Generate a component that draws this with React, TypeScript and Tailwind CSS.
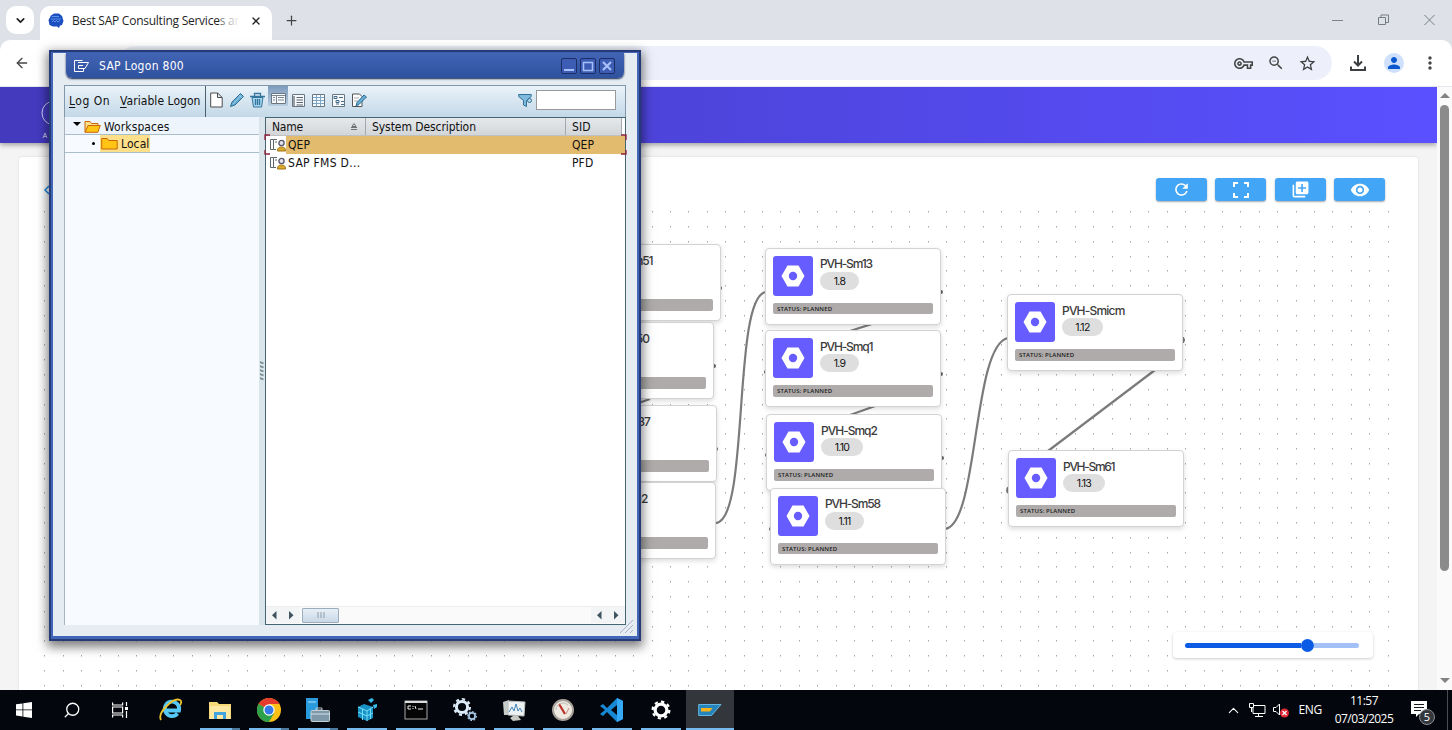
import type { ReactNode } from "react";
import {
  MdRefresh,
  MdFullscreen,
  MdLibraryAdd,
  MdVisibility,
  MdOutlineVpnKey,
  MdZoomOut,
  MdStarBorder,
  MdPerson,
  MdMoreVert,
} from "react-icons/md";
import { ArrowLeft, ChevronDown, Plus, X, ChevronUp, Search } from "lucide-react";

/* ---------- Browser chrome ---------- */

function TabStrip() {
  return (
    <div className="flex h-10 shrink-0 items-start bg-[#dee1e8]">
      <div className="ml-1.5 mt-1.5 flex h-7 w-7 items-center justify-center rounded-[10px] bg-white">
        <ChevronDown size={13} strokeWidth={3} color="#1f1f1f" />
      </div>
      <div className="ml-1.5 mt-1.5 flex h-[34px] w-[232px] items-center rounded-t-[10px] bg-white pb-[5px] pl-2">
        <svg width="16" height="16" viewBox="0 0 16 16">
          <path d="M3 2.500 6 .5h5l3 2.500 1.500 5-1.500 4-2 .5-1 2.500-2-1.500H5L1.500 12 .5 7Z" fill="#1b4fc0" />
          <path d="M4 3.500h7M3 6h10M4 9l1.500-1.500L7 9l1.500-1.500L10 9l2-1.500" stroke="#6fa3f5" strokeWidth=".8" fill="none" />
        </svg>
        <div className="relative ml-2 h-5 w-[168px] overflow-hidden whitespace-nowrap font-['Open_Sans',sans-serif] text-[12px] leading-5 tracking-[-0.25px] text-[#1f1f1f]">
          Best SAP Consulting Services ar
          <div className="absolute right-0 top-0 h-5 w-5 bg-linear-to-r from-white/30 to-white" />
        </div>
        <X size={12} strokeWidth={2.6} color="#1f1f1f" className="ml-2.5" />
      </div>
      <Plus size={15} strokeWidth={2} color="#444746" className="ml-3 mt-[13px]" />
      <div className="mr-[17px] mt-[14px] flex flex-1 items-center justify-end gap-[35px]">
        <svg width="11" height="12" viewBox="0 0 11 12"><path d="M0 6.500h11" stroke="#80858b" /></svg>
        <svg width="11" height="12" viewBox="0 0 11 12" fill="none" stroke="#777c82"><path d="M.5 3.500h7v7h-7zM3 3.500v-2.500h7.500v7.500H7.500" /></svg>
        <svg width="11" height="12" viewBox="0 0 11 12"><path d="m.5 1 10 10m0-10L.5 11" stroke="#777c82" /></svg>
      </div>
    </div>
  );
}

function AddressBar() {
  return (
    <div className="h-[47px] shrink-0 bg-[#dee1e8]">
      <div className="flex h-[47px] items-center rounded-t-[10px] border-b border-[#e4e7ec] bg-white pl-[14px]">
        <ArrowLeft size={16} strokeWidth={2} color="#444746" />
        <div className="ml-[88px] flex h-[34px] w-[1214px] items-center justify-end rounded-full bg-[#edf0fa] pr-[15px]">
          <MdOutlineVpnKey size={19} color="#444746" />
          <MdZoomOut size={18} color="#444746" className="ml-[14px]" />
          <MdStarBorder size={19} color="#3c4043" className="ml-[13px]" />
        </div>
        <svg width="16" height="16" viewBox="0 0 16 16" fill="none" stroke="#3c4043" strokeWidth="2" className="ml-[18px]">
          <path d="M8 0v10M4 6.500l4 4 4-4M1 11.500V15h14v-3.500" />
        </svg>
        <div className="ml-[18px] flex h-5 w-5 items-center justify-center rounded-full bg-[#cfe0fc]">
          <MdPerson size={18} color="#0b57d0" />
        </div>
        <MdMoreVert size={20} color="#444746" className="ml-4" />
      </div>
    </div>
  );
}

/* ---------- Workflow canvas ---------- */

type FlowNode = { x: number; y: number; name: string; step: string; pill: string; track: string; tall?: boolean };

const nodes: FlowNode[] = [
  { x: 545, y: 157, name: "PVH-Sm51", step: "1.4", pill: "w-[39px]", track: "tracking-[-1.150px]", tall: true },
  { x: 538, y: 235, name: "PVH-Sm50", step: "1.5", pill: "w-[39px]", track: "tracking-[-1.050px]", tall: true },
  { x: 541, y: 318, name: "PVH-Sm37", step: "1.6", pill: "w-[39px]", track: "tracking-[-1.250px]", tall: true },
  { x: 540, y: 395, name: "PVH-St02", step: "1.7", pill: "w-[39px]", track: "tracking-[-0.6px]", tall: true },
  { x: 765, y: 161, name: "PVH-Sm13", step: "1.8", pill: "w-[39px]", track: "tracking-[-1.150px]" },
  { x: 765, y: 243, name: "PVH-Smq1", step: "1.9", pill: "w-[39px]", track: "tracking-[-1.150px]", tall: true },
  { x: 766, y: 327, name: "PVH-Smq2", step: "1.10", pill: "w-[42px]", track: "tracking-[-1px]", tall: true },
  { x: 770, y: 401, name: "PVH-Sm58", step: "1.11", pill: "w-[39px]", track: "tracking-[-1.150px]" },
  { x: 1007, y: 207, name: "PVH-Smicm", step: "1.12", pill: "w-[41px]", track: "tracking-[-0.8px]", tall: true },
  { x: 1008, y: 363, name: "PVH-Sm61", step: "1.13", pill: "w-[42px]", track: "tracking-[-1.300px]", tall: true },
];

const handles: [number, number][] = [
  [720, 288], [714, 366], [716, 449], [941, 292], [941, 374], [942, 458],
  [766, 372], [767, 455], [771, 529], [1183, 340], [1009, 490],
];

function NodeCard({ node }: { node: FlowNode }) {
  return (
    <div
      className="absolute flex h-[77px] w-[176px] flex-col rounded-[4px] border border-[#d3d3d3] bg-white px-[7px] pt-[7px] shadow-[0_2px_5px_rgba(0,0,0,0.14)]"
      style={{ left: node.x, top: node.y }}
    >
      <div className="flex h-10">
        <div className="flex h-10 w-10 shrink-0 items-center justify-center rounded-[3px] bg-[#665cff]">
          <svg width="24" height="22" viewBox="0 0 24 22">
            <path d="M6.500.5h11L23.500 11l-6 10.500h-11L.5 11Z" fill="#fff" />
            <circle cx="12" cy="11" r="4.200" fill="#665cff" />
          </svg>
        </div>
        <div className="ml-[7px] flex flex-col items-start whitespace-nowrap font-['Inter',sans-serif]">
          <div className={`h-[16px] text-[12px] font-medium text-[#3c3c3c] ${node.tall ? "leading-[18px]" : "leading-[16px]"} ${node.track}`}>{node.name}</div>
          <div className={`flex h-[18px] items-center justify-center rounded-full bg-[#dedede] pt-px text-[10.500px] tracking-[-0.7px] text-[#111] ${node.pill}`}>
            {node.step}
          </div>
        </div>
      </div>
      <div className={`mt-[7px] flex items-center rounded-[2px] bg-[#afabab] pl-1 pt-px font-['Open_Sans',sans-serif] text-[6px] font-semibold tracking-[0.140px] text-[#1a1a1a] ${node.tall ? "h-[12px]" : "h-[11px]"}`}>
        STATUS: PLANNED
      </div>
    </div>
  );
}

function CanvasLines() {
  const dots: ReactNode[] = [];
  for (let r = 0; r < 33; r++) {
    for (let c = 0; c < 74; c++) {
      dots.push(<rect key={`${r}-${c}`} x={Math.round(44.4 + c * 18.4)} y={Math.round(211.2 + r * 14.8)} width="1" height="1.500" />);
    }
  }
  return (
    <svg className="absolute inset-0" width="1437" height="603" viewBox="0 87 1437 603">
      <g fill="#a6a6a6">{dots}</g>
      <g fill="#666">{handles.map(([x, y]) => <circle key={`${x}-${y}`} cx={x} cy={y} r="2" />)}</g>
      <g fill="none" stroke="#7b7b7b" strokeWidth="2.200">
        <path d="M716 523C750 520 732 296 766 292" />
        <path d="M945 529C979 525 972 345 1008 338" />
        <path d="M1155 370 1048 451M850 331l25-8M850 415l28-10M630 406l20-7" />
        <path d="M1183 337v6M1009 487q-3 2-1 6" />
      </g>
    </svg>
  );
}

function ActionButton({ children }: { children: ReactNode }) {
  return (
    <div className="flex h-[23px] w-[51px] items-center justify-center rounded-[3px] bg-[#42a5f5] text-white shadow-[0_1px_2px_rgba(0,0,0,0.35)]">
      {children}
    </div>
  );
}

function WorkflowPage() {
  return (
    <div className="relative isolate flex h-[603px] w-[1437px] shrink-0 flex-col overflow-hidden bg-[#f4f4f4]">
      <header className="z-10 flex h-14 shrink-0 items-center bg-linear-to-r from-[#433abd] to-[#5a50ff] pl-[41px] shadow-[0_2px_5px_rgba(0,0,0,0.35)]">
        <svg width="30" height="50" viewBox="0 0 30 50" fill="none">
          <circle cx="13" cy="23" r="12" stroke="#d5d3f5" />
          <path d="m2 48 2-5 2 5m-3.200-1.500h2.400" stroke="#d5d3f5" strokeWidth=".8" />
        </svg>
      </header>
      <main className="mx-[19px] mt-[14px] flex flex-1 flex-col rounded-t-[3px] bg-white shadow-[0_0_2px_rgba(0,0,0,0.15)]">
        <div className="flex items-center pl-[24px] pr-[33px] pt-[21px]">
          <svg width="8" height="12" viewBox="0 0 8 12"><path d="M6 2 2 6l4 4" fill="none" stroke="#1e88e5" strokeWidth="1.500" /></svg>
          <div className="z-10 ml-auto flex gap-[8.400px]">
            <ActionButton><MdRefresh size={19} /></ActionButton>
            <ActionButton>
              <svg width="16" height="16" viewBox="0 0 16 16" fill="none" stroke="#fff" strokeWidth="2"><path d="M1 5V1h4M11 1h4v4M15 11v4h-4M5 15H1v-4" /></svg>
            </ActionButton>
            <ActionButton><MdLibraryAdd size={19} /></ActionButton>
            <ActionButton><MdVisibility size={20} /></ActionButton>
          </div>
        </div>
        <div className="z-20 mb-8 ml-auto mr-[45px] mt-auto flex h-[26px] w-[200px] items-center rounded-[4px] bg-white pl-3 pr-[14px] pt-px shadow-[0_1px_3px_rgba(0,0,0,0.2)]">
          <div className="h-[5px] w-[116px] rounded-l-full bg-[#0b5be5]" />
          <div className="h-[13px] w-[13px] shrink-0 rounded-full bg-[#0b5be5]" />
          <div className="h-[5px] flex-1 rounded-r-full bg-[#a3c0f8]" />
        </div>
      </main>
      <CanvasLines />
      {nodes.map((n) => <NodeCard key={n.name} node={n} />)}
    </div>
  );
}

function PageScrollbar() {
  return (
    <div className="flex w-[15px] flex-col items-center bg-[#fafafa] pt-[6px]">
      <div className="h-0 w-0 border-x-[5px] border-b-[5px] border-x-transparent border-b-[#828282]" />
      <div className="mt-[7px] h-[466px] w-[9px] rounded-full bg-[#8b8b8b]" />
      <div className="mb-[7px] mt-auto h-0 w-0 border-x-[5px] border-t-[5px] border-x-transparent border-t-[#828282]" />
    </div>
  );
}

/* ---------- SAP Logon window ---------- */

function WindowButton({ children }: { children: ReactNode }) {
  return (
    <div className="flex h-[16px] w-[16px] items-center justify-center rounded-[2px] border border-[#1b2f66] bg-[#3c5db3]">
      <svg width="12" height="12" viewBox="0 0 12 12" fill="none" stroke="#a9c1fa">{children}</svg>
    </div>
  );
}

function Folder({ open = false }: { open?: boolean }) {
  return (
    <svg width="17" height="13" viewBox="0 0 17 13" fill="#ffc414" stroke="#c9660a">
      {open ? (
        <><path d="M1 12V1.500h5l1.500 2H14V6" fill="#ffe08a" /><path d="M1 12.300 4 5.500h12.300l-2.500 6.800Z" /></>
      ) : (
        <path d="M.7 12V1.500h5.500l1.500 2h8.500V12Z" />
      )}
    </svg>
  );
}

function SystemIcon() {
  return (
    <svg width="16" height="14" viewBox="0 0 16 14" fill="none" className="shrink-0">
      <path d="M.5 1.500h3v10h-3zM3.500 1.500H7M3.500 11.500H6M5 4h2" stroke="#5c666c" />
      <circle cx="11.500" cy="5" r="2.600" fill="#e6e4ee" stroke="#54546a" strokeWidth="1.300" />
      <path d="M7.500 13c0-3 1.500-4 4-4s4 1 4 4Z" fill="#dba92c" stroke="#a17414" />
    </svg>
  );
}

function SheetIcon({ kind }: { kind: "panel" | "list" | "grid" | "tree" }) {
  return (
    <svg width="15" height="15" viewBox="0 0 15 15" fill="none">
      <path d={kind === "panel" ? "M.5 2.500h14v10H.5z" : "M1.500 1.500h12v12h-12z"} fill="#f7fafc" stroke="#6b7780" />
      {kind === "panel" && <path d="M1 4.500h13M5.500 4v8M2 6.500h2M2 9h2M7 6.500h6M7 9h6" stroke="#7a8791" />}
      {kind === "list" && <path d="M3 3v10M5.500 4.500H12M5.500 7H12M5.500 9.500H12M5.500 12H12" stroke="#59646c" strokeWidth="1.200" />}
      {kind === "grid" && <path d="M2 4.500h11M2 7.500h11M2 10.500h11M5.500 2v11M9.500 2v11" stroke="#7ba5c4" />}
      {kind === "tree" && <path d="M3 3.500h3v2H3zM5 7.500h3v2H5zM5 11h3M8 4.500h4M10 8.500h3M10 11.500h3" stroke="#446a88" />}
    </svg>
  );
}

function Pencil() {
  return (
    <svg width="16" height="16" viewBox="0 0 16 16">
      <path d="M1.500 14.500 3 10 11.500 1.500l3 3L6 13Z" fill="#69acd2" stroke="#2c6e96" />
      <path d="m4 12 8-8.500M10 3l3 3" stroke="#a9d3ea" fill="none" strokeWidth=".7" />
    </svg>
  );
}

function WindowToolbar() {
  return (
    <div className="flex h-[32px] items-stretch border-x border-t border-[#8397aa] bg-linear-to-b from-[#eaf3f9] to-[#c3d8e7]">
      <div className="flex w-[141px] items-center gap-[10px] whitespace-nowrap border-r border-[#4b6170] pb-[2px] pl-[4px] tracking-[0.3px]">
        <span className="tracking-[0.5px]"><u className="underline-offset-2">L</u>og On</span>
        <span className="tracking-[0.05px]"><u className="underline-offset-2">V</u>ariable Logon</span>
      </div>
      <div className="flex flex-1 items-center pb-[3px] pl-[4px]">
        <svg width="13" height="16" viewBox="0 0 13 16"><path d="M.7 1h7l4.500 4.500V15H.7ZM7.500 1v4.500h4.500" fill="#fff" stroke="#4c4c4c" /></svg>
        <div className="ml-[6px]"><Pencil /></div>
        <svg width="17" height="16" viewBox="0 0 17 16" fill="none" stroke="#34769e" className="ml-1">
          <path d="M3 5.500h11L12.500 15h-8Z" fill="#a5d4ec" /><path d="M1 4.500h15M5.500 4V1.500h6V4M6.500 7v6M8.500 7v6M10.500 7v6" strokeWidth="1.300" />
        </svg>
        <div className="ml-[2px] flex h-[20px] w-[20px] items-center justify-center self-start bg-linear-to-b from-[#7d9bbd] to-[#b8cee1] pt-[5px]"><SheetIcon kind="panel" /></div>
        <div className="ml-[3px] flex gap-[5px]">
          <SheetIcon kind="list" /><SheetIcon kind="grid" /><SheetIcon kind="tree" />
          <svg width="16" height="15" viewBox="0 0 16 15"><path d="M1.500 1h7L11 3.500v10H1.500Z" fill="#fff" stroke="#555" /><path d="M3 5h5M3 8h4" stroke="#aaa" /><path d="m5 13 1-3.500L13 2l2.500 2L8 11.500Z" fill="#69acd2" stroke="#2c6e96" /></svg>
        </div>
        <svg width="15" height="15" viewBox="0 0 15 15" className="ml-auto"><path d="M.7 1.500h12.500v2L8.500 7.500v6l-3-1.500V7.500L.7 3.500Z" fill="#7fb9dc" stroke="#2f7199" /><circle cx="11.500" cy="7.500" r="2" fill="#b8d8ea" stroke="#2f7199" /></svg>
        <div className="ml-[3px] mr-[9px] h-[20px] w-[80px] border border-[#999] bg-white" />
      </div>
    </div>
  );
}

function Arrow({ dir }: { dir: "left" | "right" }) {
  return (
    <svg width="17" height="16" viewBox="0 0 17 16" className="bg-[#f2f4f6]">
      <path d={dir === "left" ? "M10.500 4v8.500L6 8.200Z" : "M6 4v8.500l4.500-4.300Z"} fill="#3e5360" />
    </svg>
  );
}

function SystemList() {
  return (
    <div className="relative flex w-[361px] flex-col border border-[#456474] bg-white">
      <div className="flex h-[18px] border-b border-[#c0c0c0] bg-linear-to-b from-[#e6e9ec] to-[#d3d6d9] leading-[18px]">
        <div className="flex w-[100px] items-center border-r border-[#a5aab0] pl-[6px] pr-2 tracking-[-0.2px]">
          Name
          <svg width="6" height="7" viewBox="0 0 6 7" className="ml-auto"><path d="M3 .5 5 3.500H1ZM0 4.500h6M0 6.500h6" fill="none" stroke="#555" strokeWidth=".8" /></svg>
        </div>
        <div className="w-[200px] border-r border-[#a5aab0] pl-[6px] tracking-[-0.070px]">System Description</div>
        <div className="w-[56px] border-r border-[#a5aab0] pl-[6px]">SID</div>
        <div className="flex-1 bg-white" />
      </div>
      <div className="flex h-[18px] items-center pl-[4px] leading-[18px]">
        <SystemIcon />
        <div className="flex h-[18px] flex-1 bg-[#e3bb6e] pl-[2px]"><span className="w-[284px]">QEP</span><span>QEP</span></div>
      </div>
      <div className="flex h-[18px] items-center pl-[4px] leading-[18px]">
        <SystemIcon />
        <span className="w-[286px] pl-[2px] tracking-[0.3px]">SAP FMS D...</span><span>PFD</span>
      </div>
      <div className="mt-auto flex h-[18px] items-center border-t border-[#eceef0] bg-[#fafafa] pb-px">
        <Arrow dir="left" /><Arrow dir="right" />
        <div className="ml-[2px] flex h-[15px] w-[37px] items-center justify-center rounded-[1px] border border-[#9aaebd] bg-linear-to-b from-[#e7eff6] to-[#c9d8e6]">
          <svg width="8" height="6" viewBox="0 0 8 6"><path d="M0 1h8M0 3h8M0 5h8" stroke="#7b8b98" strokeDasharray="2 1" strokeWidth=".8" /></svg>
        </div>
        <div className="ml-auto flex"><Arrow dir="left" /><Arrow dir="right" /></div>
      </div>
      <svg className="absolute -left-[2px] top-[16px]" width="364" height="22" viewBox="0 0 364 22" fill="none" stroke="#8b2038" strokeWidth="1.300">
        <path d="M6 1H1v5M1 16v4h5M357 1h5v5M362 16v4h-5" />
      </svg>
    </div>
  );
}

function SapLogonWindow() {
  return (
    <div className="absolute left-[49px] top-[50px] z-50 flex h-[591px] w-[592px] flex-col border-2 border-[#243b78] bg-[#4265b8] px-[2px] pb-[3px] pt-px font-['DejaVu_Sans_Condensed','DejaVu_Sans',sans-serif] text-[12px] tracking-[0.1px] text-[#111] shadow-[0_4px_10px_2px_rgba(0,0,0,0.5)] [font-stretch:condensed]">
      <div className="flex flex-1 flex-col bg-[#e5edf2] px-[11px] pb-[11px]">
        <div className="ml-[2px] mr-[2px] flex h-[25px] items-center rounded-b-[6px] bg-linear-to-b from-[#4264b4] to-[#2f529f] pl-[7px] pr-[9px] text-[12px] tracking-[0.3px] text-white shadow-[0_1px_2px_#14244d]">
          <svg width="17" height="14" viewBox="0 0 17 14" fill="none" stroke="#fff"><path d="M10.500 9.500V12.500H1.500v-11h8M5 3.500h10.500L12 9.500H5.500v-3H10" /></svg>
          <span className="ml-[9px] leading-[24px]">SAP Logon 800</span>
          <div className="ml-auto flex gap-[3px]">
            <WindowButton><path d="M1 10h10" strokeWidth="2" /></WindowButton>
            <WindowButton><path d="M1.500 2v8.500h9V2M1 2.500h10" strokeWidth="1.500" /></WindowButton>
            <WindowButton><path d="m2 2 8 8m0-8-8 8" strokeWidth="2.200" /></WindowButton>
          </div>
        </div>
        <div className="mt-[7px]"><WindowToolbar /></div>
        <div className="flex flex-1">
          <div className="flex w-[195px] flex-col border-l border-[#a9b4be] bg-[#f7faff]">
            <div className="flex h-[18px] items-center border-b border-[#a9bdcc] bg-[#edf4fc] pl-[8px] pt-px leading-[18px]">
              <div className="mb-1 h-0 w-0 border-x-[4px] border-t-[4px] border-x-transparent border-t-black" />
              <div className="ml-[3px]"><Folder open /></div>
              <span className="ml-[3px] pt-px">Workspaces</span>
            </div>
            <div className="flex h-[18px] items-center border-b border-[#a9bdcc] pl-[27px]">
              <div className="h-[3px] w-[3px] rounded-full bg-black" />
              <div className="ml-[5px] flex h-[17px] items-center bg-[#ffe08a] pl-[1px] pr-[1px] leading-[17px]"><Folder /><span className="ml-[3px] pt-[2px]">Local</span></div>
            </div>
          </div>
          <div className="flex w-[6px] flex-col items-center justify-center bg-[#d9e5ea]">
            <svg width="4" height="20" viewBox="0 0 4 20"><path d="m0 1 3.500 1.500m-3.500 2.500 3.500 1.500m-3.500 2.500 3.500 1.500m-3.500 2.500 3.500 1.500m-3.500 2.500 3.500 1.500" stroke="#758990" strokeWidth="1.700" fill="none" /></svg>
          </div>
          <SystemList />
        </div>
      </div>
      <svg className="absolute bottom-[5px] right-[5px]" width="14" height="14" viewBox="0 0 14 14"><path d="M0 13 13 0M5 13l8-8M10 13l3-3" stroke="#a9adc6" /></svg>
    </div>
  );
}

/* ---------- Taskbar ---------- */

function Gear({ x, y, r, color }: { x: number; y: number; r: number; color: string }) {
  return (
    <g fill="none" stroke={color}>
      <circle cx={x} cy={y} r={r * 0.62} strokeWidth={r * 0.34} />
      <circle cx={x} cy={y} r={r * 0.88} strokeWidth={r * 0.24} pathLength={80} strokeDasharray="5 5" />
    </g>
  );
}

const taskIcons: { name: string; icon: ReactNode }[] = [
  { name: "ie", icon: <><path d="M18.500 15.500A7.200 7.200 0 1 1 20 12.500H6" fill="none" stroke="#55c8f5" strokeWidth="3.800" /><path d="M2 22C-2 15 14-1 21 2c2 1 1 4 0 5" fill="none" stroke="#eec32d" strokeWidth="1.800" /></> },
  { name: "explorer", icon: <><path d="M1 4h8l2 2h12v15H1Z" fill="#f7d978" /><path d="M2 8h20v13H2Z" fill="#ffe9a2" /><path d="M6 21v-7h12v7h-3v-4H9v4Z" fill="#42a5de" /></> },
  { name: "chrome", icon: <><circle cx="12" cy="12" r="12" fill="#fbc116" /><path d="M12 12 1.600 6A12 12 0 0 1 22.400 6H12Z" fill="#e33b2e" /><path d="M1.600 6A12 12 0 0 0 12 24l5.200-9-5.200-3Z" fill="#2da04b" /><circle cx="12" cy="12" r="5.700" fill="#fff" /><circle cx="12" cy="12" r="4.500" fill="#3479e8" /></> },
  { name: "server", icon: <><path d="M0 0h12v21H0Z" fill="#299bdc" /><path d="M2 4h8" stroke="#b8e2fa" /><path d="M10 12h6v-2h-6z" fill="none" stroke="#bac6ce" /><rect x="5" y="12.500" width="18.500" height="11" rx="1" fill="#7e98aa" stroke="#c4d0d8" /><path d="M5 16h19" stroke="#d7e1e7" /></> },
  { name: "regedit", icon: <><path d="m3 9 6-3 9 3v11l-6 3-9-4Z" fill="#1893c6" /><path d="m3 9 9 4 6-4M12 13v10M7.500 11v11M15.500 11v10M3 14l9 4 6-3" stroke="#75dcf7" fill="none" /><path d="m13 2 4-2 2 2-3 3ZM18 7l4-1v3l-3 2Z" fill="#36bce8" /></> },
  { name: "cmd", icon: <><rect x="1" y="3" width="22" height="18" fill="#050505" stroke="#a7a7a7" /><path d="M1 4h22" stroke="#ddd" strokeWidth="2" /><path d="M4 8h3M4 8v3h3m2-3v1m0 1v1m2-3 1 3m2 0h5" stroke="#eee" fill="none" /></> },
  { name: "services", icon: <><Gear x={9} y={9} r={9} color="#dcebf8" /><Gear x={19} y={18} r={5} color="#a8c7e4" /></> },
  { name: "monitor", icon: <><path d="m1 4 6-2v15H2Z" fill="#c8ccc8" /><path d="m6 3 17 1-1 14-16-1Z" fill="#edf1f2" stroke="#b9bfc0" /><path d="m7 14 3-5 2 4 2-7 2 7 2-3 2 4" stroke="#4286bd" fill="none" /><path d="m8 20 3-2h5l3 4-8 1Z" fill="#c9c9c3" /></> },
  { name: "gauge", icon: <><circle cx="12" cy="12" r="10" fill="#eeeae1" stroke="#a9a29a" strokeWidth="2" /><path d="m8 6 6 10" stroke="#bb3029" strokeWidth="2.200" /><path d="m18 10-3 6" stroke="#c88" /><path d="M5 12a7 7 0 0 1 12-5" stroke="#bbb" fill="none" /></> },
  { name: "code", icon: <><path d="m17 0 6 3v18l-6 3L7 14l-4 4-3-2 5-4-5-4 3-2 4 4Zm0 7-6 5 6 5Z" fill="#1688d4" fillRule="evenodd" /><path d="m17 0 6 3v18l-6 3Z" fill="#35a9f5" /></> },
  { name: "settings", icon: <Gear x={12} y={12} r={9.500} color="#fff" /> },
  { name: "sap", icon: <><path d="M.7 6.500h22.300L13.500 17.500H.7Z" fill="#2385bb" stroke="#67b5df" /><path d="M3 10h11.500L12 13.500H3Z" fill="#f6b21b" /></> },
];

function Taskbar() {
  return (
    <div className="flex h-10 shrink-0 bg-[#03060c] text-white">
      <div className="flex h-10 w-12 items-center justify-center">
        <svg width="16" height="16" viewBox="0 0 16 16" fill="#fff"><path d="M0 2.300 6.500 1.400v6.100H0ZM7.300 1.300 16 0v7.500H7.300ZM0 8.300h6.500v6.200L0 13.600ZM7.300 8.300H16V16l-8.700-1.300Z" /></svg>
      </div>
      <div className="flex h-10 w-12 items-center justify-center"><Search size={18} strokeWidth={1.700} className="-scale-x-100" /></div>
      <div className="flex h-10 w-12 items-center justify-center">
        <svg width="16" height="16" viewBox="0 0 16 16" fill="none" stroke="#fff" strokeWidth="1.200"><path d="M.6.500v2.500h10V.5M.6 15.500V13h10v2.500M.6 5h10v6H.6ZM14.500 0v4M14.500 9v7" /><path d="M13 5h3v3h-3z" fill="#fff" stroke="none" /></svg>
      </div>
      <div className="ml-[3px] flex gap-px">
        {taskIcons.map(({ name, icon }, i) => (
          <div key={name} className={`flex h-10 w-12 flex-col items-center ${name === "sap" ? "bg-[#33373b]" : ""}`}>
            <svg width="24" height="24" viewBox="0 0 24 24" className="mt-[8px]">{icon}</svg>
            {i > 0 && (
              <div className={`mt-auto flex h-[2px] bg-[#76b9ed] ${name === "sap" ? "w-12" : "w-10"}`}>
                {i < 4 && <div className="ml-auto w-2 bg-[#4d7ba0]" />}
              </div>
            )}
          </div>
        ))}
      </div>
      <div className="ml-auto flex items-center font-['Open_Sans',sans-serif] text-[12px]">
        <ChevronUp size={17} strokeWidth={1.500} />
        <svg width="17" height="15" viewBox="0 0 17 15" fill="none" stroke="#fff" className="ml-[7px]"><path d="M4 2.500h12v8H4V5M9.500 11v3M6 13.500h8M.5.500h4v4h-4zM2.500 4v5" /></svg>
        <svg width="17" height="16" viewBox="0 0 17 16" fill="none" className="ml-[7px]"><path d="M.5 5.500H3L6.500 2v11L3 9.500H.5Z" stroke="#fff" /><circle cx="11.500" cy="11" r="4.500" fill="#df2934" /><path d="m9.500 9 4 4m0-4-4 4" stroke="#fff" strokeWidth="1.300" /></svg>
        <span className="ml-[8px] tracking-[-0.3px]">ENG</span>
        <div className="ml-[12px] flex w-[60px] flex-col items-center text-[12px] leading-[18px] tracking-[-0.5px]"><span>11:57</span><span>07/03/2025</span></div>
        <div className="relative ml-[17px] h-10 w-[26px]">
          <svg width="17" height="18" viewBox="0 0 17 18" className="mt-[10px]"><path d="M0 1h16v13H8l-3 3v-3H0Z" fill="#fff" /><path d="M3 4.500h10M3 7.500h10M3 10.500h7" stroke="#15181c" /></svg>
          <div className="absolute left-[8px] top-[19px] flex h-4 w-4 items-center justify-center rounded-full border border-[#8a8d91] bg-[#34373b] text-[11px]">5</div>
        </div>
        <div className="ml-[10px] mr-[4px] h-10 w-px bg-[#4a4d52]" />
      </div>
    </div>
  );
}

export default function App() {
  return (
    <div className="relative flex h-[730px] w-[1452px] flex-col overflow-hidden bg-white">
      <TabStrip />
      <AddressBar />
      <div className="flex h-[603px] shrink-0">
        <WorkflowPage />
        <PageScrollbar />
      </div>
      <Taskbar />
      <SapLogonWindow />
    </div>
  );
}
